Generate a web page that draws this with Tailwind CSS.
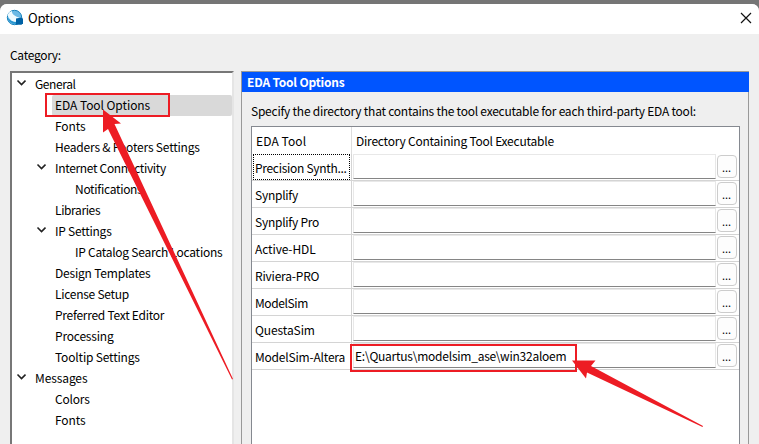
<!DOCTYPE html>
<html lang="en">
<head>
<meta charset="utf-8">
<title>Options</title>
<script src="https://cdn.jsdelivr.net/npm/@tailwindcss/browser@4"></script>
</head>
<body class="relative w-[759px] h-[444px] overflow-hidden bg-[#757575] font-['Noto_Sans_CJK_SC',sans-serif] text-[12px] text-black whitespace-nowrap">
<div class="mt-[4px] h-[440px] bg-[#efefef] rounded-t-[7px] overflow-hidden flex flex-col">
  <header class="h-[30px] shrink-0 bg-white flex items-center pl-[6px] pr-[7px]">
    <svg class="-mt-[2px] w-[18px] h-[18px]" viewBox="0 0 18 18"><circle cx="8.5" cy="8.5" r="7.2" fill="#6bb9e5" stroke="#1682bd" stroke-width="1"/><path d="M1.3 6Q3 2.5 6 2Q5 6 14 9L12 14Q4 13 1.3 6Z" fill="#eefaff"/><path d="M1.3 8Q4 13 11 13L10 15Q3 15 1.3 8Z" fill="#2695cf"/><path d="M10 9.5l5.5-1 1.5 1.2v4.5l-1.5 1.5H10Z" fill="#0062a5"/></svg>
    <span class="ml-[4px] -mt-[2px] text-[13px] leading-[18px] tracking-[-0.25px]">Options</span>
    <svg class="ml-auto -mt-[2px] w-[12px] h-[12px]" viewBox="0 0 12 12"><path d="M1 1L11 11M11 1L1 11" stroke="#111" stroke-width="1.2"/></svg>
  </header>
  <div class="h-[37px] shrink-0 pl-[10px] pt-[12px] leading-[18px] tracking-[-0.3px]">Category:</div>
  <main class="flex flex-1 pl-[10px]">
    <nav class="w-[224px] bg-white border-t-2 border-l-2 border-[#777] border-r-2 border-r-[#e5e5e5] pt-px leading-[19px]">
      <div class="h-[21px] flex pl-[4px]"><svg class="w-[10px] h-[21px] mr-[9px]" viewBox="0 0 10 21"><path d="M1.5 6.5L5.5 10.5L9.5 6.5" fill="none" stroke="#222" stroke-width="1.6"/></svg><span class="tracking-[-0.4px]">General</span></div>
      <div class="h-[21px] ml-[40px] pl-[3px] bg-[#d9d9d9] rounded-[2px] tracking-[-0.07px]">EDA Tool Options</div>
      <div class="h-[21px] pl-[43px] tracking-[-0.1px]">Fonts</div>
      <div class="h-[21px] pl-[43px] tracking-[-0.2px]">Headers &amp; Footers Settings</div>
      <div class="h-[21px] flex pl-[24px]"><svg class="w-[10px] h-[21px] mr-[9px]" viewBox="0 0 10 21"><path d="M1.5 6.5L5.5 10.5L9.5 6.5" fill="none" stroke="#222" stroke-width="1.6"/></svg><span class="tracking-[-0.33px]">Internet Connectivity</span></div>
      <div class="h-[21px] pl-[63px] tracking-[-0.3px]">Notifications</div>
      <div class="h-[21px] pl-[43px] tracking-[-0.38px]">Libraries</div>
      <div class="h-[21px] flex pl-[24px]"><svg class="w-[10px] h-[21px] mr-[9px]" viewBox="0 0 10 21"><path d="M1.5 6.5L5.5 10.5L9.5 6.5" fill="none" stroke="#222" stroke-width="1.6"/></svg><span class="tracking-[-0.25px]">IP Settings</span></div>
      <div class="h-[21px] pl-[63px] tracking-[-0.26px]">IP Catalog Search Locations</div>
      <div class="h-[21px] pl-[43px] tracking-[-0.2px]">Design Templates</div>
      <div class="h-[21px] pl-[43px] tracking-[-0.27px]">License Setup</div>
      <div class="h-[21px] pl-[43px] tracking-[-0.27px]">Preferred Text Editor</div>
      <div class="h-[21px] pl-[43px] tracking-[-0.2px]">Processing</div>
      <div class="h-[21px] pl-[43px] tracking-[-0.18px]">Tooltip Settings</div>
      <div class="h-[21px] flex pl-[4px]"><svg class="w-[10px] h-[21px] mr-[9px]" viewBox="0 0 10 21"><path d="M1.5 6.5L5.5 10.5L9.5 6.5" fill="none" stroke="#222" stroke-width="1.6"/></svg><span class="tracking-[-0.1px]">Messages</span></div>
      <div class="h-[21px] pl-[43px] tracking-[-0.2px]">Colors</div>
      <div class="h-[21px] pl-[43px] tracking-[-0.1px]">Fonts</div>
    </nav>
    <section class="ml-[7px] w-[508px] border border-b-0 border-[#999] flex flex-col">
      <h1 class="h-[20px] -mr-px shrink-0 bg-[#0055ff] text-white font-bold pl-[5px] leading-[20px] tracking-[-0.2px]">EDA Tool Options</h1>
      <p class="h-[34px] shrink-0 pl-[9px] pt-[9px] leading-[20px] tracking-[-0.24px]">Specify the directory that contains the tool executable for each third-party EDA tool:</p>
      <div class="ml-[9px] w-[489px] flex-1 bg-white border border-b-0 border-[#858990]">
        <div class="h-[27px] flex leading-[27px]"><span class="w-[100px] pl-[4px] border-r border-[#ddd] tracking-[0.1px]">EDA Tool</span><span class="pl-[4px] tracking-[-0.23px]">Directory Containing Tool Executable</span></div>
        <div id="rows"></div>
      </div>
    </section>
  </main>
</div>
<template id="row">
  <div class="h-[27px] flex border-b border-[#d4d4d4]">
    <div class="w-[100px] border-r border-[#d4d4d4] pl-px"><div class="name h-[26px] w-[97px] pl-[2px] leading-[27px]"></div></div>
    <div class="field ml-px mr-px w-[363px] h-[25px] border-t border-l border-r border-[#e8e8e8] border-b border-b-[#858585] pl-px leading-[23px] tracking-[-0.24px]"></div>
    <div class="mt-px w-[20px] h-[23px] border border-[#ccc] rounded-[4px] bg-[#fdfdfd] pr-px text-center text-[11px] leading-[23px]">...</div>
  </div>
</template>
<script>
const tools = [
  ["Precision Synth...", "tracking-[-0.3px]"],
  ["Synplify", "tracking-[-0.25px]"],
  ["Synplify Pro", "tracking-[-0.25px]"],
  ["Active-HDL", "tracking-[-0.12px]"],
  ["Riviera-PRO", "tracking-[-0.2px]"],
  ["ModelSim", "tracking-[-0.4px]"],
  ["QuestaSim", "tracking-[-0.1px]"],
  ["ModelSim-Altera", "tracking-[-0.2px]"],
];
tools.forEach(([tool, tracking], i) => {
  const row = document.getElementById("row").content.cloneNode(true);
  const name = row.querySelector(".name");
  name.textContent = tool;
  name.classList.add(tracking);
  if (i === 0) name.classList.add("outline-dotted", "outline-1", "-outline-offset-1", "outline-black");
  if (i === 7) row.querySelector(".field").textContent = "E:\\Quartus\\modelsim_ase\\win32aloem";
  document.getElementById("rows").append(row);
});
</script>
<svg class="absolute inset-0 w-[759px] h-[444px]" viewBox="0 0 759 444">
  <g fill="none" stroke="#ed1c24" stroke-width="2"><path d="M46 94H169V116H46Z"/><path d="M351 345H576V371H351Z"/></g>
  <g fill="#ed1c24"><path d="M103 109.5L121 123.5L114.5 124L233 379L232 379.5L108 129L103 132.5Z"/><path d="M572 360.5L595.5 360.5L591 366L703 426L702.5 427L587 372.5L586 378.5Z"/></g>
</svg>
</body>
</html>
